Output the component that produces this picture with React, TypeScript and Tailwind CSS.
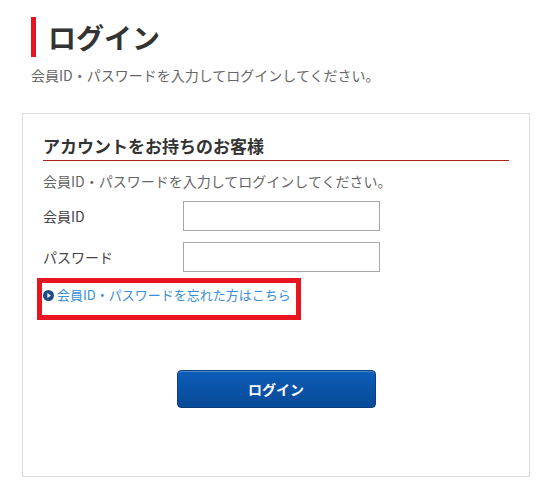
export default function App() {
  return (
    <div className="w-[554px] h-[483px] bg-white pl-[22px] font-['Noto_Sans_CJK_JP','Noto_Sans',sans-serif] text-[#333]">
      {/* Page heading */}
      <div className="pt-[17px] pl-[9px]">
        <h1 className="flex h-[40px] items-center border-l-[5px] border-[#e8141e] pl-3 text-[28px] font-bold leading-none text-[#333]">
          ログイン
        </h1>
        <p className="mt-[8px] text-[14px] leading-5 text-[#666]">
          会員ID・パスワードを入力してログインしてください。
        </p>
      </div>

      {/* Login box */}
      <div className="mt-[28px] h-[364px] w-[508px] border border-[#dcdcdc] px-5 pt-5">
        <h2 className="border-b border-[#b3211e] pb-[2px] text-[17px] font-bold leading-6 text-[#333]">
          アカウントをお持ちのお客様
        </h2>
        <p className="mt-[10px] text-[14px] leading-5 text-[#666]">
          会員ID・パスワードを入力してログインしてください。
        </p>

        <div className="mt-[10px] flex flex-col gap-[11px]">
          <div className="flex items-center">
            <label className="w-[140px] text-[14px] text-[#444]">会員ID</label>
            <input className="h-[30px] w-[197px] border border-[#aaa6a6] bg-white px-2 text-[14px] outline-none" />
          </div>
          <div className="flex items-center">
            <label className="w-[140px] text-[14px] text-[#444]">パスワード</label>
            <input type="password" className="h-[30px] w-[197px] border border-[#aaa6a6] bg-white px-2 text-[14px] outline-none" />
          </div>
        </div>

        <div className="-ml-[6px] mt-[6px] w-fit border-[5px] border-[#e8141e] pb-[10px] pl-[1px] pr-[5px] pt-[2px]">
          <a href="#" className="flex items-center gap-[3px] text-[13px] leading-5 text-[#3a8dd6]">
            <svg width="11" height="11" viewBox="0 0 10 10">
              <circle cx="5" cy="5" r="5" fill="#1d4d87" />
              <path d="M4 2.8 L7.2 5 L4 7.2 Z" fill="#fff" />
            </svg>
            会員ID・パスワードを忘れた方はこちら
          </a>
        </div>

        <div className="mt-[50px] flex justify-center">
          <button className="h-[38px] w-[199px] rounded-[4px] border border-[#0a3f80] bg-gradient-to-b from-[#0c5dba] to-[#084a96] text-[14px] font-bold text-white shadow-[inset_0_1px_0_rgba(255,255,255,0.25)]">
            ログイン
          </button>
        </div>
      </div>
    </div>
  );
}
